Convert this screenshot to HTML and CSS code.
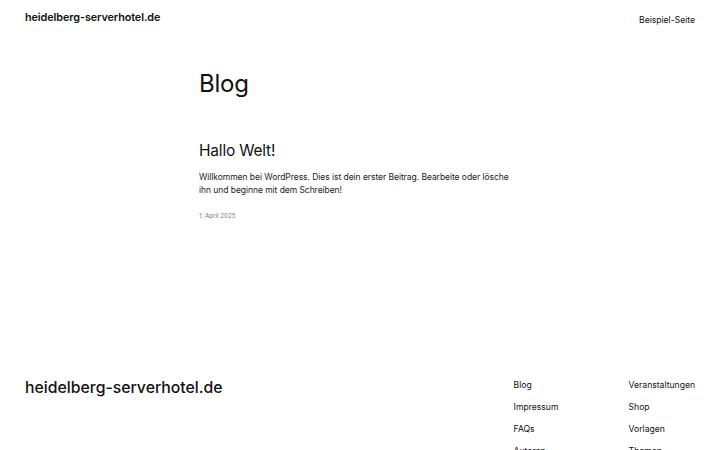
FILE: index.html
```html
<!DOCTYPE html>
<html lang="de">
<head>
<meta charset="utf-8">
<title>Blog – heidelberg-serverhotel.de</title>
<link rel="stylesheet" href="styles.css">
</head>
<body>
<header class="site-header">
  <a class="site-title" href="#">heidelberg-serverhotel.de</a>
  <nav class="header-nav"><a href="#">Beispiel-Seite</a></nav>
</header>
<main class="content">
  <h1 class="page-title">Blog</h1>
  <article class="post">
    <h2 class="post-title"><a href="#">Hallo Welt!</a></h2>
    <p class="post-excerpt">Willkommen bei WordPress. Dies ist dein erster Beitrag. Bearbeite oder lösche ihn und beginne mit dem Schreiben!</p>
    <time class="post-date">1. April 2025</time>
  </article>
</main>
<footer class="site-footer">
  <a class="footer-title" href="#">heidelberg-serverhotel.de</a>
  <nav class="footer-nav">
    <ul class="footer-col">
      <li><a href="#">Blog</a></li>
      <li><a href="#">Impressum</a></li>
      <li><a href="#">FAQs</a></li>
      <li><a href="#">Autoren</a></li>
    </ul>
    <ul class="footer-col">
      <li><a href="#">Veranstaltungen</a></li>
      <li><a href="#">Shop</a></li>
      <li><a href="#">Vorlagen</a></li>
      <li><a href="#">Themen</a></li>
    </ul>
  </nav>
</footer>
</body>
</html>
```
FILE: styles.css
```css
* { box-sizing: border-box; }
html, body { margin: 0; padding: 0; background: #fff; }
body {
  font-family: Inter, "Noto Sans", sans-serif;
  color: #111;
  width: 720px;
  height: 450px;
  overflow: hidden;
}
a { color: inherit; text-decoration: none; }

.site-header {
  display: flex;
  justify-content: space-between;
  align-items: center;
  padding: 0 25px;
  height: 34px;
}
.site-title {
  font-size: 10.85px;
  font-weight: 600;
  letter-spacing: -0.1px;
}
.header-nav a {
  font-size: 8.6px;
  font-weight: 400;
}

.content {
  width: 320px;
  margin: 0 0 0 199px;
  padding-top: 35px;
  height: 332px;
}
.page-title {
  margin: 0;
  font-size: 24px;
  font-weight: 400;
  line-height: 30px;
  letter-spacing: -0.25px;
}
.post { margin-top: 42px; }
.post-title {
  margin: 0;
  font-size: 15.5px;
  font-weight: 400;
  line-height: 20px;
  letter-spacing: -0.2px;
}
.post-excerpt {
  margin: 10px 0 0 0;
  font-size: 8.5px;
  line-height: 13px;
  letter-spacing: -0.05px;
  color: #222;
}
.post-date {
  display: block;
  margin-top: 15px;
  font-size: 6.2px;
  color: #777;
}

.site-footer {
  display: flex;
  justify-content: space-between;
  align-items: flex-start;
  padding: 0 25px;
}
.footer-title {
  font-size: 15.8px;
  font-weight: 500;
  line-height: 20px;
  margin-top: 12px;
}
.footer-nav {
  display: flex;
  margin-top: 13px;
}
.footer-col {
  list-style: none;
  margin: 0;
  padding: 0;
  display: flex;
  flex-direction: column;
  gap: 9px;
}
.footer-col:first-child { width: 115px; }
.footer-col li {
  font-size: 8.6px;
  line-height: 13px;
}
```
